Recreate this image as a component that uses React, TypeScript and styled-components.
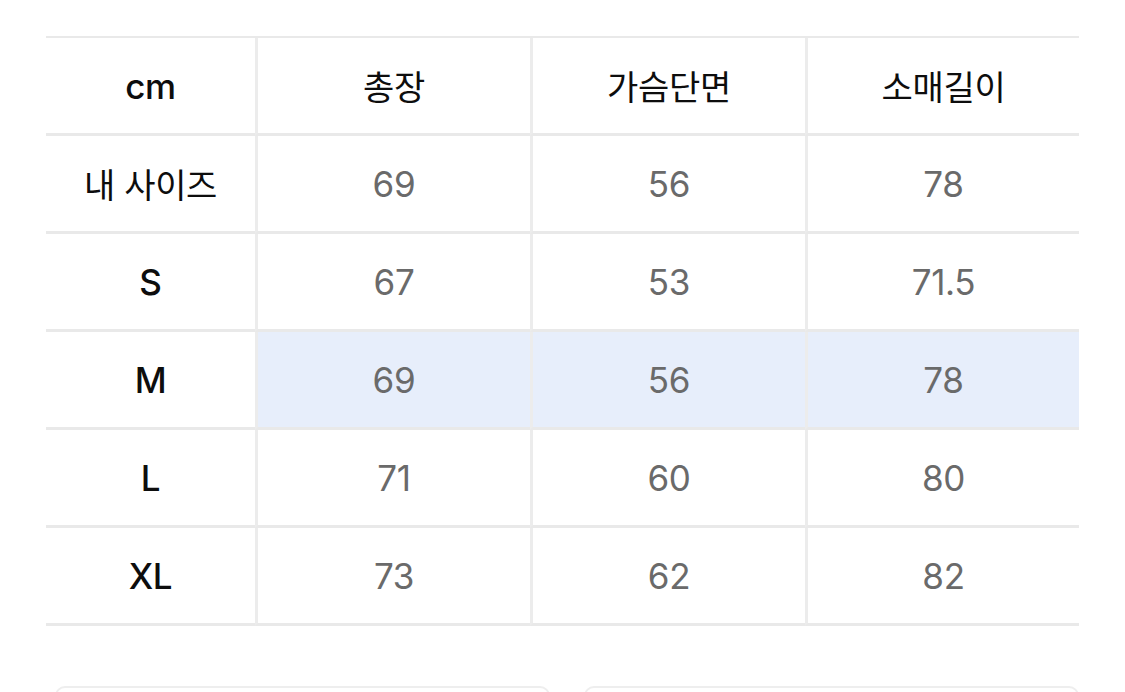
import * as React from "react";
import styled, { createGlobalStyle } from "styled-components";

interface SizeRow {
  label: string;
  values: string[];
  active?: boolean;
}

const headers = ["cm", "총장", "가슴단면", "소매길이"];

const rows: SizeRow[] = [
  { label: "내 사이즈", values: ["69", "56", "78"] },
  { label: "S", values: ["67", "53", "71.5"] },
  { label: "M", values: ["69", "56", "78"], active: true },
  { label: "L", values: ["71", "60", "80"] },
  { label: "XL", values: ["73", "62", "82"] },
];

const isLatin = (s: string) => /^[A-Za-z0-9.\s]+$/.test(s);

const GlobalStyle = createGlobalStyle`
  html, body {
    margin: 0;
    padding: 0;
    background: #ffffff;
  }
  body {
    font-family: "Inter", "Noto Sans CJK KR", sans-serif;
    -webkit-font-smoothing: antialiased;
  }
`;

const Page = styled.div`
  width: 1125px;
  height: 692px;
  overflow: hidden;
  box-sizing: border-box;
  padding: 36px 46px 0 46px;
  background: #ffffff;
`;

const Table = styled.div`
  display: grid;
  grid-template-columns: 209px 275px 275px 274px;
  grid-auto-rows: 98px;
  border-top: 2px solid #e9e9e9;
`;

const Cell = styled.div<{ $first?: boolean; $active?: boolean }>`
  display: flex;
  align-items: center;
  justify-content: center;
  box-sizing: border-box;
  border-bottom: 3px solid #e9e9e9;
  border-left: ${(p) => (p.$first ? "none" : "3px solid #ececec")};
  background: ${(p) => (p.$active ? "#e7eefb" : "transparent")};
`;

const LabelText = styled.span<{ $latin?: boolean }>`
  font-family: "Inter", "Noto Sans CJK KR", sans-serif;
  font-size: ${(p) => (p.$latin ? "35px" : "34px")};
  font-weight: ${(p) => (p.$latin ? 500 : 400)};
  color: #0d0d0d;
  letter-spacing: ${(p) => (p.$latin ? "-0.3px" : "-0.3px")};
`;

const ValueText = styled.span`
  font-family: "Inter", "Noto Sans CJK KR", sans-serif;
  font-size: 35px;
  font-weight: 400;
  color: #6a6a6a;
  letter-spacing: -0.3px;
`;

const Buttons = styled.div`
  display: flex;
  gap: 34px;
  margin-top: 60px;
  padding-left: 9px;
`;

const ButtonTop = styled.div`
  flex: 1;
  height: 40px;
  border: 2px solid #eeeeee;
  border-radius: 10px;
`;

export default () => {
  return (
    <>
      <GlobalStyle />
      <Page>
        <Table>
          {headers.map((h, i) => (
            <Cell key={h} $first={i === 0}>
              <LabelText $latin={isLatin(h)}>{h}</LabelText>
            </Cell>
          ))}
          {rows.map(({ label, values, active }) => (
            <React.Fragment key={label}>
              <Cell $first>
                <LabelText $latin={isLatin(label)}>{label}</LabelText>
              </Cell>
              {values.map((v, i) => (
                <Cell key={i} $active={active}>
                  <ValueText>{v}</ValueText>
                </Cell>
              ))}
            </React.Fragment>
          ))}
        </Table>
        <Buttons>
          <ButtonTop />
          <ButtonTop />
        </Buttons>
      </Page>
    </>
  );
};
